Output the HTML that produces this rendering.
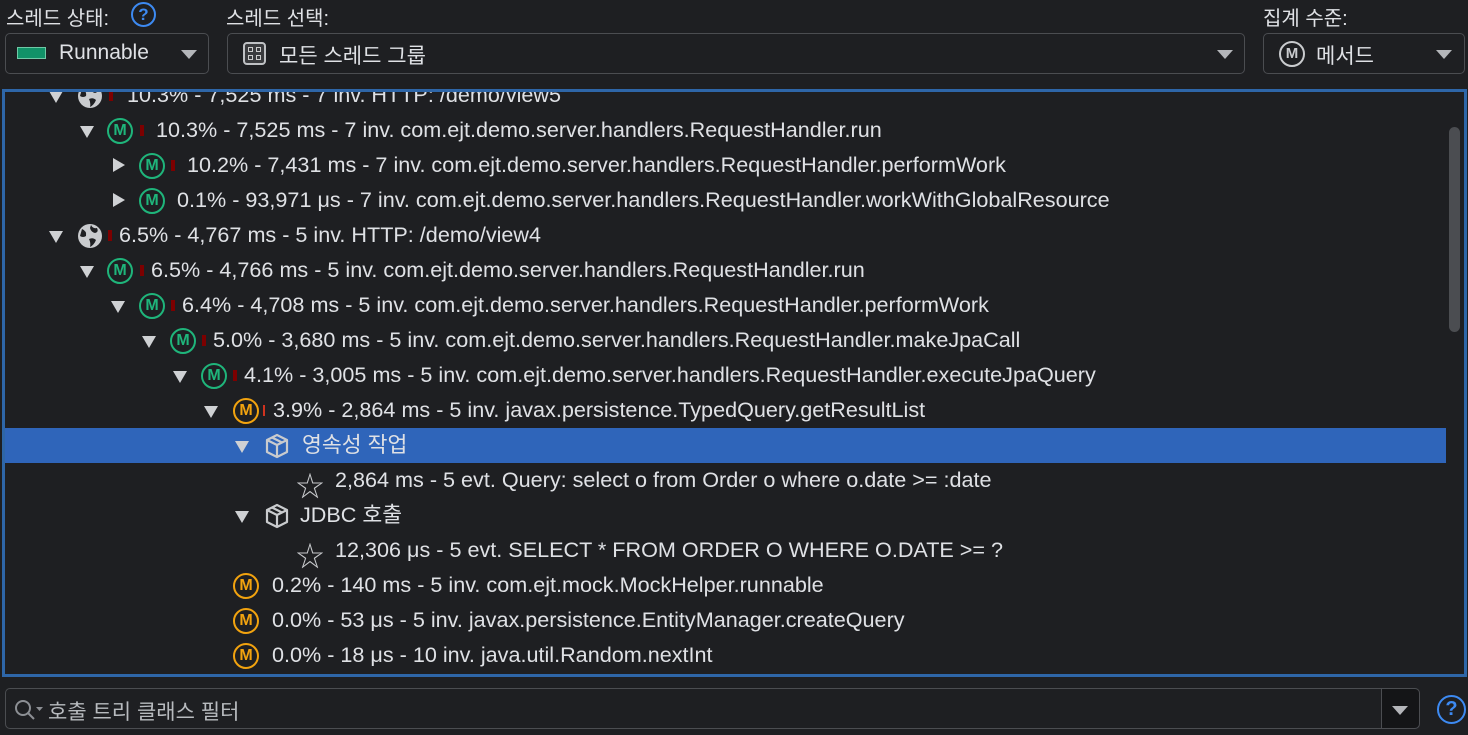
<!DOCTYPE html>
<html><head><meta charset="utf-8"><style>
*{margin:0;padding:0;box-sizing:border-box}
body{width:1468px;height:735px;background:#1e1f22;overflow:hidden;position:relative;font-family:"Liberation Sans","Noto Sans CJK KR",sans-serif;color:#dfe1e5;font-size:20px}
.a{position:absolute;white-space:nowrap}
.lbl{top:2px;font-size:20px;color:#dfe1e5}
.box{position:absolute;border:1.5px solid #4b4d51;border-radius:5px;background:#1e1f22}
.dd{position:absolute;width:0;height:0;border-left:8px solid transparent;border-right:8px solid transparent;border-top:9px solid #b4b6ba}
.tree{position:absolute;left:2px;top:89px;width:1465px;height:588px;border:3px solid #2e66a8;overflow:hidden;background:#1e1f22}
.row{position:absolute;left:0;width:1441px;height:35px}
.t{position:absolute;top:5px;font-size:21.6px;line-height:24px}
.td{position:absolute;top:13px;width:0;height:0;border-left:7px solid transparent;border-right:7px solid transparent;border-top:12px solid #cfd1d4}
.tr{position:absolute;top:10px;width:0;height:0;border-top:7px solid transparent;border-bottom:7px solid transparent;border-left:12px solid #cfd1d4}
.m{position:absolute;top:5px;width:26px;height:26px;border:2.5px solid #1fb57b;border-radius:50%;color:#1fb57b;font-weight:bold;font-size:16px;text-align:center;line-height:21px}
.mo{border-color:#f2a30f;color:#f2a30f}
.mk{position:absolute;top:12px;width:4px;height:11px;background:#7d0000}
</style></head><body>
<div class="a lbl" style="left:6px">스레드 상태:</div>
<div class="a" style="left:131px;top:2px;width:25px;height:25px;border:2px solid #3d8af2;border-radius:50%;color:#3d8af2;font-size:17px;font-weight:bold;text-align:center;line-height:21px">?</div>
<div class="a lbl" style="left:226px">스레드 선택:</div>
<div class="a lbl" style="left:1263px">집계 수준:</div>

<div class="box" style="left:5px;top:33px;width:204px;height:41px"></div>
<div class="a" style="left:17px;top:47px;width:29px;height:12px;background:#119268;border:1px solid #6fc9a6"></div>
<div class="a" style="left:59px;top:41px;font-size:21px">Runnable</div>
<div class="dd" style="left:181px;top:50px"></div>

<div class="box" style="left:227px;top:33px;width:1018px;height:41px"></div>
<div class="a" style="left:243px;top:42px;width:23px;height:23px;border:2px solid #bfc1c4;border-radius:4px;background:#3a3b3e"></div>
<div class="a" style="left:248px;top:47px;width:5px;height:5px;border:1.5px solid #ccc"></div>
<div class="a" style="left:256px;top:47px;width:5px;height:5px;border:1.5px solid #ccc"></div>
<div class="a" style="left:248px;top:55px;width:5px;height:5px;border:1.5px solid #ccc"></div>
<div class="a" style="left:256px;top:55px;width:5px;height:5px;border:1.5px solid #ccc"></div>
<div class="a" style="left:279px;top:40px;font-size:21px">모든 스레드 그룹</div>
<div class="dd" style="left:1217px;top:50px"></div>

<div class="box" style="left:1263px;top:33px;width:202px;height:41px"></div>
<div class="a" style="left:1279px;top:41px;width:26px;height:26px;border:2.5px solid #c9cbce;border-radius:50%;color:#c9cbce;font-weight:bold;font-size:15px;text-align:center;line-height:21px">M</div>
<div class="a" style="left:1316px;top:40px;font-size:21px">메서드</div>
<div class="dd" style="left:1436px;top:50px"></div>

<div class="tree">
 <div class="a" style="left:1444px;top:35px;width:11px;height:205px;background:#4b4d51;border-radius:6px"></div>
 <div class="row" style="top:-14px">
  <div class="td" style="left:44px"></div>
  <svg class="a" style="left:72px;top:5px" width="26" height="26" viewBox="0 0 26 26"><circle cx="13" cy="13" r="12" fill="#c9cbce"/><path d="M5 6 Q10 8 9 13 Q6 15 3 13 Z M14 2 Q16 6 20 5 Q22 9 18 10 Q14 9 13 5 Z M12 16 Q16 14 19 17 Q17 22 13 24 Q14 20 12 16Z" fill="#1e1f22"/></svg>
  <div class="mk" style="left:104px"></div>
  <div class="t" style="left:122px">10.3% - 7,525 ms - 7 inv. HTTP: /demo/view5</div></div>
 <div class="row" style="top:21px">
  <div class="td" style="left:75px"></div><div class="m" style="left:102px">M</div><div class="mk" style="left:135px"></div>
  <div class="t" style="left:151px">10.3% - 7,525 ms - 7 inv. com.ejt.demo.server.handlers.RequestHandler.run</div></div>
 <div class="row" style="top:56px">
  <div class="tr" style="left:108px"></div><div class="m" style="left:134px">M</div><div class="mk" style="left:166px"></div>
  <div class="t" style="left:182px">10.2% - 7,431 ms - 7 inv. com.ejt.demo.server.handlers.RequestHandler.performWork</div></div>
 <div class="row" style="top:91px">
  <div class="tr" style="left:108px"></div><div class="m" style="left:134px">M</div>
  <div class="t" style="left:172px">0.1% - 93,971 μs - 7 inv. com.ejt.demo.server.handlers.RequestHandler.workWithGlobalResource</div></div>
 <div class="row" style="top:126px">
  <div class="td" style="left:44px"></div>
  <svg class="a" style="left:72px;top:5px" width="26" height="26" viewBox="0 0 26 26"><circle cx="13" cy="13" r="12" fill="#c9cbce"/><path d="M5 6 Q10 8 9 13 Q6 15 3 13 Z M14 2 Q16 6 20 5 Q22 9 18 10 Q14 9 13 5 Z M12 16 Q16 14 19 17 Q17 22 13 24 Q14 20 12 16Z" fill="#1e1f22"/></svg>
  <div class="mk" style="left:103px"></div>
  <div class="t" style="left:114px">6.5% - 4,767 ms - 5 inv. HTTP: /demo/view4</div></div>
 <div class="row" style="top:161px">
  <div class="td" style="left:75px"></div><div class="m" style="left:102px">M</div><div class="mk" style="left:135px"></div>
  <div class="t" style="left:146px">6.5% - 4,766 ms - 5 inv. com.ejt.demo.server.handlers.RequestHandler.run</div></div>
 <div class="row" style="top:196px">
  <div class="td" style="left:106px"></div><div class="m" style="left:134px">M</div><div class="mk" style="left:166px"></div>
  <div class="t" style="left:177px">6.4% - 4,708 ms - 5 inv. com.ejt.demo.server.handlers.RequestHandler.performWork</div></div>
 <div class="row" style="top:231px">
  <div class="td" style="left:137px"></div><div class="m" style="left:165px">M</div><div class="mk" style="left:197px"></div>
  <div class="t" style="left:208px">5.0% - 3,680 ms - 5 inv. com.ejt.demo.server.handlers.RequestHandler.makeJpaCall</div></div>
 <div class="row" style="top:266px">
  <div class="td" style="left:168px"></div><div class="m" style="left:196px">M</div><div class="mk" style="left:228px"></div>
  <div class="t" style="left:239px">4.1% - 3,005 ms - 5 inv. com.ejt.demo.server.handlers.RequestHandler.executeJpaQuery</div></div>
 <div class="row" style="top:301px">
  <div class="td" style="left:199px"></div><div class="m mo" style="left:228px">M</div><div class="mk" style="left:258px;width:2px;background:#d0331f"></div>
  <div class="t" style="left:268px">3.9% - 2,864 ms - 5 inv. javax.persistence.TypedQuery.getResultList</div></div>
 <div class="row" style="top:336px;background:#2f65ba">
  <div class="td" style="left:230px"></div>
  <svg class="a" style="left:259px;top:5px" width="26" height="26" viewBox="0 0 26 26" fill="none" stroke="#c9cbce" stroke-width="2.2" stroke-linejoin="round"><path d="M13 2 L23 7 V19 L13 24 L3 19 V7 Z M3 7 L13 12 L23 7 M13 12 V24 M8 4.5 L18 9.5"/></svg>
  <div class="t" style="left:297px">영속성 작업</div></div>
 <div class="row" style="top:371px">
  <div class="a" style="left:291px;top:2px;font-size:28px;color:#c9cbce">☆</div>
  <div class="t" style="left:330px">2,864 ms - 5 evt. Query: select o from Order o where o.date &gt;= :date</div></div>
 <div class="row" style="top:406px">
  <div class="td" style="left:230px"></div>
  <svg class="a" style="left:259px;top:5px" width="26" height="26" viewBox="0 0 26 26" fill="none" stroke="#c9cbce" stroke-width="2.2" stroke-linejoin="round"><path d="M13 2 L23 7 V19 L13 24 L3 19 V7 Z M3 7 L13 12 L23 7 M13 12 V24 M8 4.5 L18 9.5"/></svg>
  <div class="t" style="left:295px">JDBC 호출</div></div>
 <div class="row" style="top:441px">
  <div class="a" style="left:291px;top:2px;font-size:28px;color:#c9cbce">☆</div>
  <div class="t" style="left:330px">12,306 μs - 5 evt. SELECT * FROM ORDER O WHERE O.DATE &gt;= ?</div></div>
 <div class="row" style="top:476px">
  <div class="m mo" style="left:228px">M</div>
  <div class="t" style="left:267px">0.2% - 140 ms - 5 inv. com.ejt.mock.MockHelper.runnable</div></div>
 <div class="row" style="top:511px">
  <div class="m mo" style="left:228px">M</div>
  <div class="t" style="left:267px">0.0% - 53 μs - 5 inv. javax.persistence.EntityManager.createQuery</div></div>
 <div class="row" style="top:546px">
  <div class="m mo" style="left:228px">M</div>
  <div class="t" style="left:267px">0.0% - 18 μs - 10 inv. java.util.Random.nextInt</div></div>
</div>

<div class="box" style="left:5px;top:688px;width:1415px;height:41px"></div>
<div class="a" style="left:1381px;top:689px;width:38px;height:39px;border-left:1.5px solid #4b4d51;background:#141517;border-radius:0 5px 5px 0"></div>
<div class="dd" style="left:1392px;top:706px"></div>
<svg class="a" style="left:14px;top:699px" width="30" height="22" viewBox="0 0 30 22" fill="none" stroke="#8c8f94" stroke-width="2"><circle cx="9" cy="9" r="7"/><path d="M14 14 L20 20"/><path d="M22 8 h7 l-3.5 4z" fill="#8c8f94" stroke="none"/></svg>
<div class="a" style="left:48px;top:696px;color:#b8bbbf;font-size:21px">호출 트리 클래스 필터</div>
<div class="a" style="left:1437px;top:695px;width:29px;height:29px;border:2.5px solid #3d8af2;border-radius:50%;color:#3d8af2;font-size:20px;font-weight:bold;text-align:center;line-height:24px">?</div>
</body></html>
